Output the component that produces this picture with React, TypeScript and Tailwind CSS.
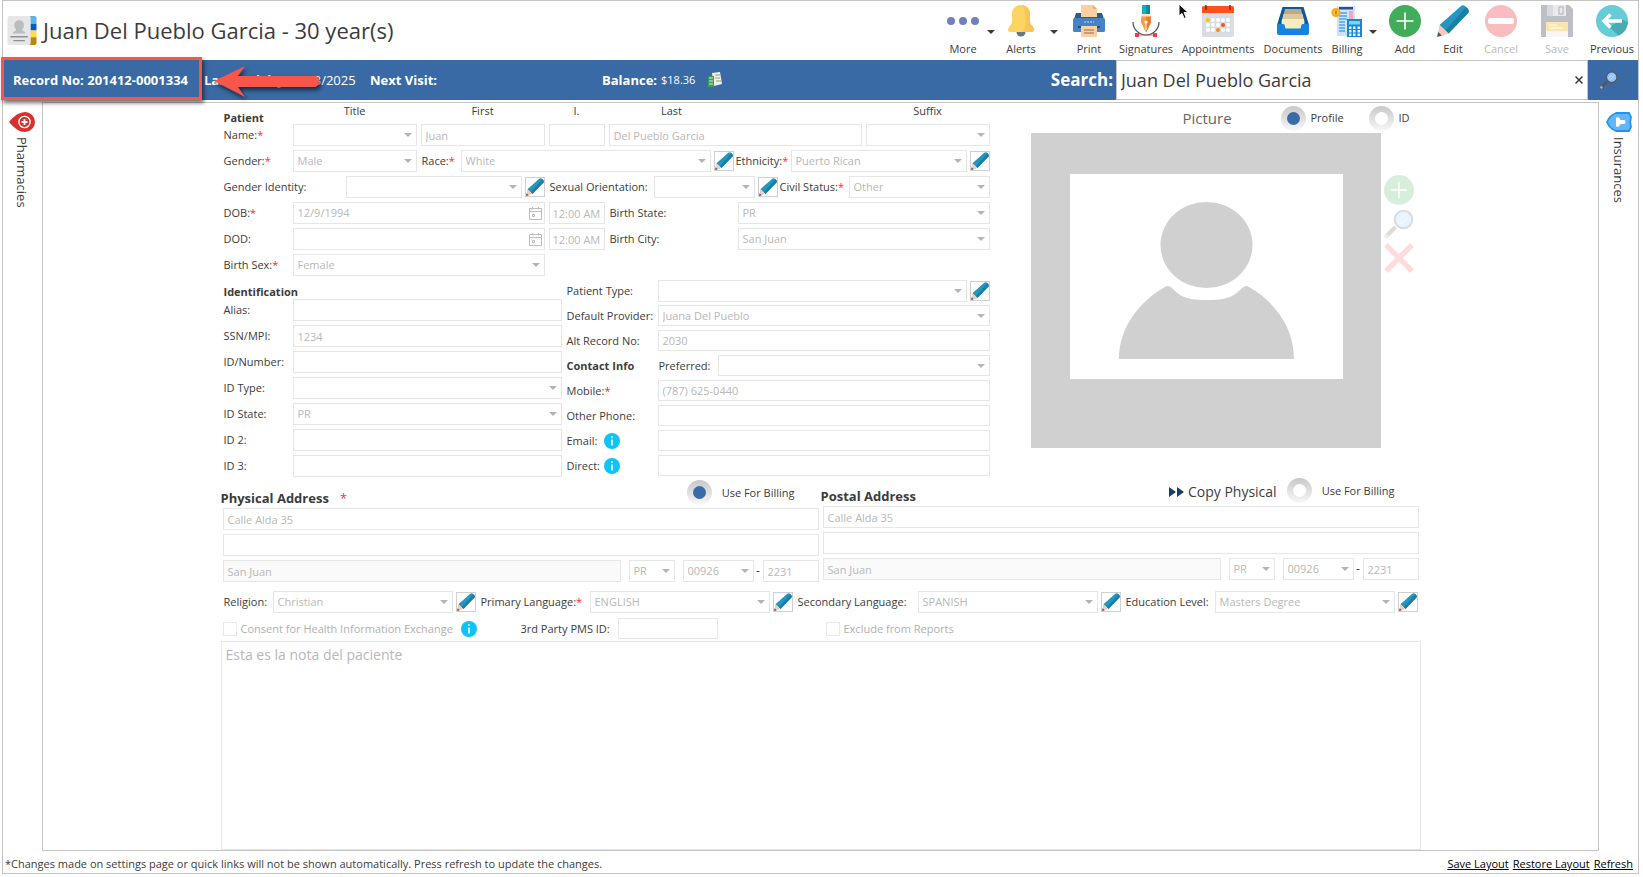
import { useId } from "react";
import type { ReactNode } from "react";
import clsx from "clsx";

const fieldStyles =
  "min-w-0 border border-[#e6e6e6] bg-white px-1 text-[11px] leading-4 text-[#b8b8b8] disabled:opacity-100";

/* ---------- Icons ---------- */

const Pencil = ({ className }: { className?: string }) => (
  <svg viewBox="0 0 32 32" className={className} aria-hidden="true">
    <path d="M23.500 1.500q2.500-2.500 5 0l2 2q2.500 2.500.2 5L11.500 28.500 2.500 20z" fill="#2596be" />
    <path d="M29 2l1.500 1.500q2.500 2.500.2 5L11.500 28.500 8.500 25.500z" fill="#1a7fa6" />
    <path d="M2.500 20l9 8.500-9 3.200-2-1.500z" fill="#f7c9b6" />
    <path d="M1.200 27L0 32l4.800-1.500z" fill="#3c5c78" />
  </svg>
);

const Caret = ({ className }: { className?: string }) => (
  <svg viewBox="0 0 8 4" className={clsx("h-1 w-2", className)} aria-hidden="true">
    <path d="M0 0h8L4 4z" fill="currentColor" />
  </svg>
);

const InfoIcon = () => (
  <svg viewBox="0 0 16 16" className="size-4 shrink-0" role="img" aria-label="Information">
    <circle cx="8" cy="8" r="8" fill="#0cc4fa" />
    <path d="M8 3.2v1.6M8 6.4v6" stroke="#fff" strokeWidth="1.6" />
  </svg>
);

const CalendarIcon = () => (
  <svg viewBox="0 0 13 13" className="size-[13px] shrink-0" fill="none" stroke="#bdbdbd" aria-hidden="true">
    <path d="M.5 1.5h12v11H.5zM.5 4.5h12M3.5 0v2.5M9.5 0v2.5M3.5 7.5h2v2h-2z" />
  </svg>
);

const Magnifier = ({ className }: { className?: string }) => (
  <svg viewBox="0 0 30 30" className={className} aria-hidden="true">
    <path d="M11.5 18L2 27.5" stroke="#5a5547" strokeWidth="4" />
    <path d="M3.6 26L1 28.6" stroke="#c9b06a" strokeWidth="4" />
    <circle cx="19.5" cy="10.5" r="8.8" fill="#8cc4fb" stroke="#555" strokeWidth="2" />
    <path d="M14 12l7-6M16.500 15l8-7" stroke="#bfe0ff" strokeWidth="1.500" />
  </svg>
);

const MoreIcon = () => (
  <svg viewBox="0 0 32 32" className="size-8" fill="#7280bd">
    <circle cx="4" cy="16" r="4" />
    <circle cx="16" cy="16" r="4" />
    <circle cx="28" cy="16" r="4" />
  </svg>
);

const BellIcon = () => (
  <svg viewBox="0 0 32 32" className="size-8">
    <path d="M11.500 27h9a4.500 4.500 0 0 1-9 0z" fill="#637988" />
    <path d="M16 0c-6 0-9 4-9 9v8c0 3-4 4-4 8q0 2 2 2h22q2 0 2-2c0-4-4-5-4-8V9c0-5-3-9-9-9z" fill="#fdd462" />
    <path d="M17 0c5 1 8 4 8 9v8c0 3 4 4 4 8q0 2-2 2h-9c4-5 4-22-1-27z" fill="#f8c455" />
  </svg>
);

const PrinterIcon = () => (
  <svg viewBox="0 0 32 32" className="size-8">
    <path d="M3 8h26l3 9H0z" fill="#2d5b8d" />
    <path d="M8 0h12l4 4v8H8z" fill="#fdd0a2" />
    <path d="M20 0l4 4h-4z" fill="#e8ad7d" />
    <rect y="13" width="32" height="14" rx="1.500" fill="#4583c4" />
    <rect x="5" y="21" width="22" height="2" fill="#2d4b6d" />
    <path d="M8 21h16v11H8z" fill="#fdd0a2" />
    <path d="M11 25h10M11 28h10" stroke="#8a6a55" />
    <path d="M11 17h10" stroke="#b9dcff" strokeDasharray="2 1" />
  </svg>
);

const SignatureIcon = () => (
  <svg viewBox="0 0 32 32" className="size-8">
    <path d="M3 17a13 13 0 0 0 26 0" fill="none" stroke="#44545e" strokeWidth="1.200" />
    <path d="M7 30h18" stroke="#f43b47" strokeWidth=".8" />
    <path d="M12 0h4v9h-4z" fill="#12b0c4" />
    <path d="M16 0h4v9h-4z" fill="#0b8b9d" />
    <path d="M11.500 11h9l.7 6L16 27.500 10.800 17z" fill="#f99a45" />
    <path d="M16 11h4.500l.7 6L16 27.500z" fill="#ee7c25" />
    <path d="M12 9h8v2.500h-8z" fill="#fbe3cc" />
    <path d="M16 17v8" stroke="#fff" />
    <circle cx="16" cy="17" r="1.600" fill="#fff" />
    <path d="M5 28h4v4H5zM23 28h4v4h-4z" fill="#f43b47" />
  </svg>
);

const AppointmentsIcon = () => (
  <svg viewBox="0 0 32 32" className="size-8">
    <rect y="1" width="32" height="31" rx="2" fill="#dadce3" />
    <path d="M0 8V3q0-2 2-2h28q2 0 2 2v5z" fill="#fa5319" />
    <path d="M4 0v5M28 0v5" stroke="#8d2f18" strokeWidth="1.600" />
    <g fill="#fff">
      <circle cx="11" cy="15" r="2" /><circle cx="16" cy="15" r="2" /><circle cx="21" cy="15" r="2" /><circle cx="26" cy="15" r="2" />
      <circle cx="6" cy="20" r="2" /><circle cx="11" cy="20" r="2" /><circle cx="16" cy="20" r="2" /><circle cx="26" cy="20" r="2" />
      <circle cx="6" cy="25" r="2" /><circle cx="11" cy="25" r="2" /><circle cx="21" cy="25" r="2" /><circle cx="26" cy="25" r="2" />
    </g>
    <circle cx="6" cy="15" r="2" fill="#fdc500" />
    <circle cx="21" cy="20" r="2" fill="#fa5319" />
    <circle cx="16" cy="25" r="2" fill="#fb8c00" />
  </svg>
);

const DocumentsIcon = () => (
  <svg viewBox="0 0 32 32" className="size-8">
    <path d="M5.500 2h21L32 20v2H0v-2z" fill="#0d5a94" />
    <path d="M8 4h16l2 8H6z" fill="#bda888" />
    <path d="M6.500 9h19l2 8h-23z" fill="#dcc9a0" />
    <path d="M5 14h22l1 11H4z" fill="#f7ecc0" />
    <path d="M0 19h6q2 0 2 3 0 1.500 1.500 1.500h13Q24 23.500 24 22q0-3 2-3h6v9q0 2-2 2H2q-2 0-2-2z" fill="#1583e2" />
  </svg>
);

const BillingIcon = () => (
  <svg viewBox="0 0 32 32" className="size-8">
    <path d="M6 1h18v30H6z" fill="#cfe4fa" />
    <path d="M8 2h14v2.500H8z" fill="#2b4b9b" />
    <path d="M8 8h8M8 11h8M8 14h8M8 17h6M8 20h6M8 23h6M8 26h6" stroke="#4aa5ec" strokeWidth="1.500" />
    <path d="M18 6h4v8h-4z" fill="#f2a6bd" />
    <path d="M16 14h15v18H16z" fill="#1d86d1" />
    <path d="M18 16h11v3.500H18z" fill="#74d8f2" />
    <path d="M18 21.500h2.500V24H18zM22 21.500h2.500V24H22zM26.500 21.500H29V24h-2.500zM18 25h2.500v2.500H18zM22 25h2.500v2.500H22zM26.500 25H29v2.500h-2.500zM18 28.500h2.500V31H18zM22 28.500h2.500V31H22zM26.500 28.500H29V31h-2.500z" fill="#e2f4ff" />
    <circle cx="5" cy="7.500" r="4.600" fill="#f9a51a" />
    <circle cx="5" cy="7.500" r="2.800" fill="#fdc544" />
    <path d="M5 5.500v4" stroke="#c46b08" strokeWidth="1.400" />
  </svg>
);

const AddIcon = ({ className }: { className?: string }) => (
  <svg viewBox="0 0 32 32" className={className}>
    <circle cx="16" cy="16" r="16" fill="#41ad5b" />
    <path d="M16 7.500v17M7.500 16h17" stroke="#fff" strokeWidth="1.600" />
  </svg>
);

const CancelIcon = () => (
  <svg viewBox="0 0 32 32" className="size-8">
    <circle cx="16" cy="16" r="16" fill="#f8bdbe" />
    <rect x="3" y="13" width="26" height="6" rx="2.500" fill="#fff" />
  </svg>
);

const SaveIcon = () => (
  <svg viewBox="0 0 32 32" className="size-8">
    <path d="M0 0h28l4 4v28H0z" fill="#bcbfc6" />
    <path d="M6 0h19v11H6z" fill="#e9eaec" />
    <path d="M6 0h6v11H6z" fill="#d7d9dd" />
    <rect x="18" y="2" width="4" height="7" fill="none" stroke="#aeb1b8" />
    <path d="M5 17h22v15H5z" fill="#f6f6f6" />
    <path d="M5 17h22v9H5z" fill="#fce5ab" />
    <path d="M8 20h8M8 23h14" stroke="#fff" strokeWidth="1.200" />
  </svg>
);

const PreviousIcon = () => (
  <svg viewBox="0 0 32 32" className="size-8">
    <circle cx="16" cy="16" r="16" fill="#66cdd6" />
    <path d="M13 22l9.600 8.600A16 16 0 0 0 32 17l-6-2.500z" fill="#48aab5" />
    <path d="M14.500 9.500L8 16l6.500 6.500M8.500 16H26" fill="none" stroke="#fff" strokeWidth="3.400" />
  </svg>
);

const ContactIcon = () => (
  <svg viewBox="0 0 30 30" className="h-[29px] w-[30px] shrink-0" aria-hidden="true">
    <path d="M23 0h5q2 0 2 2v6h-7z" fill="#5db4ea" />
    <path d="M23 8h7v7h-7z" fill="#0a5cbb" />
    <path d="M23 15h7v7h-7z" fill="#ffdc4e" />
    <path d="M23 22h7v6q0 2-2 2h-5z" fill="#b58a08" />
    <rect width="24" height="30" rx="2" fill="#e6e6e6" />
    <path d="M12 4.500c3 0 5 2 5 5 0 2-1 3.500-2 4.500 0 2 3.500 1.500 3.500 4h-13c0-2.500 3.500-2 3.500-4-1-1-2-2.500-2-4.500 0-3 2-5 5-5z" fill="#b9bec1" />
    <path d="M3 21.500h18M6 25.500h12" stroke="#8b9296" strokeWidth="1.400" />
  </svg>
);

const PharmacyPin = () => (
  <svg viewBox="0 0 26 20" className="h-5 w-[26px]" aria-hidden="true">
    <path d="M0 10Q8 0 16 0a9.500 9.500 0 0 1 0 20Q8 20 0 10z" fill="#d8302f" />
    <circle cx="15.500" cy="10" r="5.600" fill="none" stroke="#fff" strokeWidth="1.400" />
    <path d="M15.500 7v6M12.500 10h6" stroke="#fff" strokeWidth="1.800" />
  </svg>
);

const InsuranceBadge = () => (
  <svg viewBox="0 0 26 20" className="h-5 w-[26px]" aria-hidden="true">
    <path d="M1 10Q4 3 10 1h13l2 4q-1.500 5 0 10l-2 4H10Q4 17 1 10z" fill="#64b5f8" stroke="#2094f3" strokeWidth="1.800" />
    <path d="M10 5.500h3l1.500 2.500H18q1.500 0 1.500 2T18 12h-3.500L13 14.500h-3z" fill="#fff" />
  </svg>
);

/* ---------- Form controls ---------- */

interface LabelProps {
  htmlFor?: string;
  required?: boolean;
  className?: string;
  children: ReactNode;
}

const Label = ({ htmlFor, required, className, children }: LabelProps) => (
  <label htmlFor={htmlFor} className={clsx("shrink-0 text-[11px] leading-4 whitespace-nowrap", className)}>
    {children}
    {required && <span className="text-[#ff2a2a]">*</span>}
  </label>
);

interface FieldProps {
  id?: string;
  name?: string;
  value?: string;
  className?: string;
}

const TextField = ({ id, name, value = "", className }: FieldProps) => (
  <input
    id={id}
    type="text"
    aria-label={name}
    defaultValue={value}
    disabled
    className={clsx(fieldStyles, className ?? "h-[22px] flex-1")}
  />
);

const SelectField = ({ id, name, value = "", className }: FieldProps) => (
  <div className={clsx("grid min-w-0 items-center", className ?? "h-[22px] flex-1")}>
    <select
      id={id}
      aria-label={name}
      disabled
      className={clsx(fieldStyles, "col-start-1 row-start-1 h-full w-full appearance-none")}
    >
      <option>{value}</option>
    </select>
    <Caret className="pointer-events-none col-start-1 row-start-1 mr-[5px] justify-self-end text-[#b4b4b4]" />
  </div>
);

const EditableSelect = ({ id, value, className }: FieldProps) => (
  <div className={clsx("flex min-w-0 items-center gap-[3px]", className ?? "flex-1")}>
    <SelectField id={id} value={value} />
    <button type="button" aria-label="Edit list" className="size-5 shrink-0 border border-[#cfcfcf] bg-white">
      <Pencil className="size-[18px]" />
    </button>
  </div>
);

const DateField = ({ id, value = "" }: FieldProps) => (
  <div className="flex h-[22px] w-[252px] items-center border border-[#e6e6e6] pr-[2px]">
    <input
      id={id}
      type="text"
      defaultValue={value}
      disabled
      className="min-w-0 flex-1 px-1 text-[11px] leading-4 text-[#b8b8b8]"
    />
    <CalendarIcon />
  </div>
);

interface RadioProps {
  group: string;
  label: string;
  checked?: boolean;
  className?: string;
}

const Radio = ({ group, label, checked, className }: RadioProps) => (
  <label className={clsx("flex items-center text-[11px] leading-4 whitespace-nowrap", className)}>
    <input
      type="radio"
      name={group}
      defaultChecked={checked}
      className="grid size-[25px] shrink-0 appearance-none place-content-center rounded-full bg-linear-to-b from-[#c8c8c8] to-[#f8f8f8] before:size-[13px] before:rounded-full before:bg-white checked:before:bg-[#3a6ba6]"
    />
    {label}
  </label>
);

const CheckField = ({ label }: { label: string }) => (
  <label className="flex items-center gap-1 text-[11px] leading-4 whitespace-nowrap text-[#b0b0b0]">
    <input type="checkbox" disabled className="size-[14px] appearance-none border border-[#e9e9e9]" />
    {label}
  </label>
);

/* ---------- Toolbar ---------- */

interface ToolProps {
  label: string;
  icon: ReactNode;
  className: string;
  disabled?: boolean;
}

const Tool = ({ label, icon, className, disabled }: ToolProps) => (
  <button
    type="button"
    disabled={disabled}
    className={clsx("flex shrink-0 flex-col items-center gap-1 text-[11px] leading-4 disabled:text-[#b9b9b9]", className)}
  >
    {icon}
    {label}
  </button>
);

const ToolMenu = ({ label, className }: { label: string; className: string }) => (
  <button type="button" aria-label={label} className={clsx("flex h-[57px] shrink-0 items-center justify-center pb-1", className)}>
    <Caret />
  </button>
);

const Toolbar = () => (
  <header className="flex h-[59px] items-start justify-between">
    <div className="flex items-center gap-[6px] pt-[13px] pl-1">
      <ContactIcon />
      <h1 className="text-[22px] leading-8 whitespace-nowrap">Juan Del Pueblo Garcia - 30 year(s)</h1>
    </div>
    <nav className="relative flex pt-1 pr-[2px]">
      <Tool label="More" icon={<MoreIcon />} className="w-[42px]" />
      <ToolMenu label="More options" className="w-[14px]" />
      <Tool label="Alerts" icon={<BellIcon />} className="w-[46px]" />
      <ToolMenu label="Alert options" className="w-5" />
      <Tool label="Print" icon={<PrinterIcon />} className="w-[50px]" />
      <Tool label="Signatures" icon={<SignatureIcon />} className="w-16" />
      <Tool label="Appointments" icon={<AppointmentsIcon />} className="w-20" />
      <Tool label="Documents" icon={<DocumentsIcon />} className="w-[70px]" />
      <Tool label="Billing" icon={<BillingIcon />} className="w-[38px]" />
      <ToolMenu label="Billing options" className="w-[14px]" />
      <Tool label="Add" icon={<AddIcon className="size-8" />} className="w-[50px]" />
      <Tool label="Edit" icon={<Pencil className="size-8" />} className="w-[46px]" />
      <Tool label="Cancel" icon={<CancelIcon />} className="w-[50px]" disabled />
      <Tool label="Save" icon={<SaveIcon />} className="w-[62px]" disabled />
      <Tool label="Previous" icon={<PreviousIcon />} className="w-12" />
      {/* Mouse pointer */}
      <svg viewBox="0 0 12 18" className="absolute top-[2px] left-[236px] h-[18px] w-3" aria-hidden="true">
        <path d="M1 1v12l3-2.500 2.200 5 2-1L6 9.500h4z" fill="#111" stroke="#fff" />
      </svg>
    </nav>
  </header>
);

const RecordBar = () => (
  <div className="relative flex h-10 items-center bg-[#396aa5] text-[13px] leading-5 whitespace-nowrap text-white">
    <strong className="w-[191px] pl-[10px]">Record No: 201412-0001334</strong>
    <p className="flex w-[176px] gap-[6px] pl-[10px]">
      <strong>Last Activity:</strong> 10/3/2025
    </p>
    <strong className="w-[232px]">Next Visit:</strong>
    <p className="flex items-center gap-1">
      <strong>Balance:</strong>
      <span className="text-[11px]">$18.36</span>
      <svg viewBox="0 0 16 16" className="ml-2 size-4" aria-hidden="true">
        <path d="M5 1l8-1 2 12-8 2z" fill="#f1f1e6" />
        <path d="M8 3h5M8 6h5M9 9h5" stroke="#8aa07c" />
        <path d="M1 4h6v11H1z" fill="#3e9a57" />
        <path d="M2 6h4M2 9h4M2 12h4" stroke="#d7f0d8" />
      </svg>
    </p>
    <label htmlFor="search" className="ml-auto pr-[3px] text-[17px] font-bold">
      Search:
    </label>
    <div className="flex h-full w-[472px] items-center border border-[#c4c4c4] bg-white pr-1 text-[#3c3c3c]">
      <input
        id="search"
        type="text"
        defaultValue="Juan Del Pueblo Garcia"
        className="min-w-0 flex-1 pl-1 text-[18px] leading-6 outline-none"
      />
      <button type="button" aria-label="Clear search">
        <svg viewBox="0 0 8 8" className="size-2" stroke="currentColor" strokeWidth="1.500">
          <path d="M.5.5l7 7M7.500.5l-7 7" />
        </svg>
      </button>
    </div>
    <button type="button" aria-label="Search" className="flex h-full w-[50px] items-center pl-3">
      <Magnifier className="size-[18px]" />
    </button>

    {/* Callout around the record number */}
    <div className="absolute -top-[3px] -left-[2px] h-[43px] w-[201px] border-3 border-[#f9564a] shadow-[2px_3px_4px_rgba(0,0,0,0.55)]" />
    <svg viewBox="0 0 108 36" className="absolute top-1 left-[210px] h-9 w-[108px] drop-shadow-[2px_3px_2px_rgba(0,0,0,0.6)]" aria-hidden="true">
      <path d="M1 17L32 2 25 12H102q4 0 4 5t-4 6H25l7 10z" fill="#f9564a" />
    </svg>
  </div>
);

/* ---------- Form sections ---------- */

const PatientSection = () => {
  const id = useId();

  return (
    <div className="flex flex-col gap-1">
      <div className="-mb-1 flex h-[21px] text-[11px] leading-4">
        <h2 className="w-[69px] self-end leading-3 font-bold">Patient</h2>
        <span className="w-[124px] text-center">Title</span>
        <span className="ml-1 w-[124px] text-center">First</span>
        <span className="ml-1 w-14 text-center">I.</span>
        <span className="ml-1 w-[126px] text-center">Last</span>
        <span className="ml-auto w-[124px] text-center">Suffix</span>
      </div>
      <div className="flex items-center">
        <Label htmlFor={`${id}-first`} required className="w-[69px]">Name:</Label>
        <div className="flex flex-1 gap-1">
          <SelectField name="Title" className="h-[22px] w-[124px]" />
          <TextField id={`${id}-first`} value="Juan" className="h-[22px] w-[124px]" />
          <TextField name="Initial" className="h-[22px] w-14" />
          <TextField name="Last name" value="Del Pueblo Garcia" />
          <SelectField name="Suffix" className="h-[22px] w-[124px]" />
        </div>
      </div>
      <div className="flex items-center">
        <Label htmlFor={`${id}-gender`} required className="w-[69px]">Gender:</Label>
        <SelectField id={`${id}-gender`} value="Male" className="h-[22px] w-[124px]" />
        <Label htmlFor={`${id}-race`} required className="w-11 pl-[5px]">Race:</Label>
        <EditableSelect id={`${id}-race`} value="White" />
        <Label htmlFor={`${id}-ethnicity`} required className="w-[57px] pl-[2px]">Ethnicity:</Label>
        <EditableSelect id={`${id}-ethnicity`} value="Puerto Rican" className="w-[199px]" />
      </div>
      <div className="flex items-center">
        <Label htmlFor={`${id}-identity`} className="w-[122px]">Gender Identity:</Label>
        <EditableSelect id={`${id}-identity`} className="w-[199px]" />
        <Label htmlFor={`${id}-orientation`} className="w-[109px] pl-[5px]">Sexual Orientation:</Label>
        <EditableSelect id={`${id}-orientation`} />
        <Label htmlFor={`${id}-civil`} required className="w-[71px] pl-[2px]">Civil Status:</Label>
        <SelectField id={`${id}-civil`} value="Other" className="h-[22px] w-[141px]" />
      </div>
      <div className="flex items-center">
        <Label htmlFor={`${id}-dob`} required className="w-[69px]">DOB:</Label>
        <DateField id={`${id}-dob`} value="12/9/1994" />
        <TextField name="Time of birth" value="12:00 AM" className="ml-1 h-[22px] w-14 pr-0 pl-[3px]" />
        <Label htmlFor={`${id}-state`} className="w-[133px] pl-[5px]">Birth State:</Label>
        <SelectField id={`${id}-state`} value="PR" />
      </div>
      <div className="flex items-center">
        <Label htmlFor={`${id}-dod`} className="w-[69px]">DOD:</Label>
        <DateField id={`${id}-dod`} />
        <TextField name="Time of death" value="12:00 AM" className="ml-1 h-[22px] w-14 pr-0 pl-[3px]" />
        <Label htmlFor={`${id}-city`} className="w-[133px] pl-[5px]">Birth City:</Label>
        <SelectField id={`${id}-city`} value="San Juan" />
      </div>
      <div className="flex items-center">
        <Label htmlFor={`${id}-sex`} required className="w-[69px]">Birth Sex:</Label>
        <SelectField id={`${id}-sex`} value="Female" className="h-[22px] w-[252px]" />
      </div>
    </div>
  );
};

const identificationFields = [
  { label: "Alias:", value: "" },
  { label: "SSN/MPI:", value: "1234" },
  { label: "ID/Number:", value: "" },
  { label: "ID Type:", value: "", list: true },
  { label: "ID State:", value: "PR", list: true },
  { label: "ID 2:", value: "" },
  { label: "ID 3:", value: "" },
];

const IdentificationSection = () => {
  const id = useId();

  return (
    <div className="w-[338px] shrink-0">
      <h2 className="pt-[9px] text-[11px] leading-[14px] font-bold">Identification</h2>
      <div className="flex flex-col gap-1">
        {identificationFields.map(({ label, value, list }, index) => (
          <div key={label} className="flex items-center">
            <Label htmlFor={`${id}-${index}`} className="w-[69px]">{label}</Label>
            {list ? <SelectField id={`${id}-${index}`} value={value} /> : <TextField id={`${id}-${index}`} value={value} />}
          </div>
        ))}
      </div>
    </div>
  );
};

const ContactSection = () => (
  <div className="flex flex-1 flex-col gap-1 pt-1 pl-[5px]">
    <div className="flex h-[21px] items-center">
      <Label htmlFor="patient-type" className="w-[91px]">Patient Type:</Label>
      <EditableSelect id="patient-type" />
    </div>
    <div className="flex items-center">
      <Label htmlFor="provider" className="w-[91px]">Default Provider:</Label>
      <SelectField id="provider" value="Juana Del Pueblo" className="h-[21px] flex-1" />
    </div>
    <div className="flex items-center">
      <Label htmlFor="alt-record" className="w-[91px]">Alt Record No:</Label>
      <TextField id="alt-record" value="2030" className="h-[21px] flex-1" />
    </div>
    <div className="flex items-center">
      <h2 className="w-[92px] text-[11px] leading-4 font-bold">Contact Info</h2>
      <Label htmlFor="preferred" className="w-[59px]">Preferred:</Label>
      <SelectField id="preferred" className="h-[21px] flex-1" />
    </div>
    <div className="flex items-center">
      <Label htmlFor="mobile" required className="w-[91px]">Mobile:</Label>
      <TextField id="mobile" value="(787) 625-0440" className="h-[21px] flex-1" />
    </div>
    <div className="flex items-center">
      <Label htmlFor="other-phone" className="w-[91px]">Other Phone:</Label>
      <TextField id="other-phone" className="h-[21px] flex-1" />
    </div>
    <div className="flex items-center">
      <Label htmlFor="email" className="w-[37px]">Email:</Label>
      <div className="w-[54px]"><InfoIcon /></div>
      <TextField id="email" className="h-[21px] flex-1" />
    </div>
    <div className="flex items-center">
      <Label htmlFor="direct" className="w-[37px]">Direct:</Label>
      <div className="w-[54px]"><InfoIcon /></div>
      <TextField id="direct" className="h-[21px] flex-1" />
    </div>
  </div>
);

const PictureSection = () => (
  <aside className="w-[390px] shrink-0">
    <div className="flex h-[30px] items-center">
      <h2 className="w-[250px] pl-[152px] text-[15px] leading-5 text-[#666]">Picture</h2>
      <Radio group="picture" label="Profile" checked className="w-[88px] gap-[5px]" />
      <Radio group="picture" label="ID" className="gap-[5px]" />
    </div>
    <div className="flex gap-[3px]">
      <div className="flex h-[315px] w-[350px] justify-end bg-[#d0d0d0] pt-[41px] pr-[38px]">
        <svg viewBox="0 0 273 205" className="h-[205px] w-[273px]" role="img" aria-label="No picture">
          <path d="M0 0h273v205H0z" fill="#fff" />
          <ellipse cx="136.500" cy="71" rx="46" ry="43" fill="#d0d0d0" />
          <path d="M49 185C49 153 70 127 95 113q4-3 8 2c9 10 20 11 34 11s25-1 34-11q4-5 8-2c25 14 45 40 45 72z" fill="#d0d0d0" />
        </svg>
      </div>
      <div className="flex flex-col gap-1 pt-[42px]">
        <button type="button" disabled aria-label="Add picture" className="opacity-20">
          <AddIcon className="size-[30px]" />
        </button>
        <button type="button" disabled aria-label="View picture" className="opacity-20">
          <Magnifier className="size-[30px]" />
        </button>
        <button type="button" disabled aria-label="Remove picture">
          <svg viewBox="0 0 30 30" className="size-[30px]" stroke="#fedcdc" strokeWidth="5.500">
            <path d="M2 2l26 26M28 2L2 28" />
          </svg>
        </button>
      </div>
    </div>
  </aside>
);

interface AddressProps {
  name: string;
  children: ReactNode;
}

const AddressSection = ({ name, children }: AddressProps) => (
  <section className="min-w-0">
    {children}
    <div className="flex flex-col gap-1 pl-[2px]">
      <TextField name={`${name} line 1`} value="Calle Alda 35" className="h-[22px]" />
      <TextField name={`${name} line 2`} className="h-[22px]" />
      <div className="flex items-center gap-2">
        <input
          type="text"
          aria-label={`${name} city`}
          defaultValue="San Juan"
          disabled
          className="h-[22px] min-w-0 flex-1 border border-[#e6e6e6] bg-[#fafafa] px-1 text-[11px] leading-4 text-[#b8b8b8]"
        />
        <SelectField name={`${name} state`} value="PR" className="h-[22px] w-[46px]" />
        <div className="flex items-center">
          <SelectField name={`${name} zip`} value="00926" className="h-[22px] w-[71px]" />
          <span className="w-[9px] text-center text-[12px] leading-4">-</span>
          <TextField name={`${name} zip extension`} value="2231" className="h-[22px] w-14" />
        </div>
      </div>
    </div>
  </section>
);

const DemographicsRow = () => (
  <div className="mt-[9px] flex items-center pr-[3px] pl-[3px]">
    <Label htmlFor="religion" className="w-[49px]">Religion:</Label>
    <EditableSelect id="religion" value="Christian" />
    <Label htmlFor="primary-language" required className="w-[114px] pl-[5px]">Primary Language:</Label>
    <EditableSelect id="primary-language" value="ENGLISH" />
    <Label htmlFor="secondary-language" className="w-[125px] pl-[5px]">Secondary Language:</Label>
    <EditableSelect id="secondary-language" value="SPANISH" />
    <Label htmlFor="education" className="w-[94px] pl-[5px]">Education Level:</Label>
    <EditableSelect id="education" value="Masters Degree" />
  </div>
);

interface SideTabProps {
  label: string;
  icon: ReactNode;
  className: string;
}

const SideTab = ({ label, icon, className }: SideTabProps) => (
  <button type="button" className={clsx("flex w-[39px] shrink-0 flex-col items-center gap-[5px] pt-[10px]", className)}>
    {icon}
    <span className="text-[13px] leading-4 [writing-mode:vertical-rl]">{label}</span>
  </button>
);

const App = () => {
  return (
    <div className="h-screen bg-white pr-1 pb-[3px] pl-[2px] font-['Segoe_UI','Open_Sans',sans-serif] text-[#3c3c3c]">
      <div className="flex h-full flex-col border border-[#c4c4c4]">
        <Toolbar />
        <RecordBar />

        <div className="mt-[2px] flex min-h-0 flex-1">
          <SideTab label="Pharmacies" icon={<PharmacyPin />} className="pr-[2px]" />
          <main className="min-w-0 flex-1 border border-[#c4c4c4]">
            <form className="mx-auto flex h-full w-full max-w-[1200px] flex-col">
              <div className="flex justify-between">
                <div className="w-[769px] pl-[3px]">
                  <PatientSection />
                  <div className="flex">
                    <IdentificationSection />
                    <ContactSection />
                  </div>
                </div>
                <PictureSection />
              </div>

              <div className="grid grid-cols-2 gap-[2px] pr-[2px]">
                <AddressSection name="Physical address">
                  <div className="flex h-[31px] items-start justify-between pt-[3px] pr-6">
                    <h2 className="pt-2 text-[13px] leading-5 font-bold">
                      Physical Address <span className="pl-2 text-[12px] font-normal text-[#ff2a2a]">*</span>
                    </h2>
                    <Radio group="billing-physical" label="Use For Billing" checked className="gap-[10px]" />
                  </div>
                </AddressSection>
                <AddressSection name="Postal address">
                  <div className="flex h-[29px] items-start pt-[1px] pr-6">
                    <h2 className="pt-2 text-[13px] leading-5 font-bold">Postal Address</h2>
                    <button type="button" className="ml-auto flex items-center gap-1 pr-[10px] text-[14px] leading-7">
                      <svg viewBox="0 0 15 10" className="h-[10px] w-[15px]" fill="#173f6d" aria-hidden="true">
                        <path d="M0 0l7 5-7 5zM8 0l7 5-7 5z" />
                      </svg>
                      Copy Physical
                    </button>
                    <Radio group="billing-postal" label="Use For Billing" className="gap-[10px]" />
                  </div>
                </AddressSection>
              </div>

              <DemographicsRow />

              <div className="mt-[5px] flex h-[21px] items-center pl-[2px]">
                <div className="flex w-[298px] items-center gap-2">
                  <CheckField label="Consent for Health Information Exchange" />
                  <InfoIcon />
                </div>
                <Label htmlFor="pms-id" className="w-[97px]">3rd Party PMS ID:</Label>
                <TextField id="pms-id" className="mr-[108px] h-[21px] w-[100px]" />
                <CheckField label="Exclude from Reports" />
              </div>

              <textarea
                aria-label="Patient note"
                disabled
                defaultValue="Esta es la nota del paciente"
                className="mt-[2px] min-h-0 flex-1 resize-none border border-[#e6e6e6] px-1 py-[3px] text-[14px] leading-5 text-[#b8b8b8]"
              />
            </form>
          </main>
          <SideTab label="Insurances" icon={<InsuranceBadge />} className="pl-[1px]" />
        </div>

        <footer className="flex h-[22px] items-center justify-between pt-1 pr-[5px] pl-[2px] text-[11px] leading-4 whitespace-nowrap">
          <p>*Changes made on settings page or quick links will not be shown automatically. Press refresh to update the changes.</p>
          <div className="flex gap-1 text-black">
            <a href="#save-layout" className="underline">Save Layout</a>
            <a href="#restore-layout" className="underline">Restore Layout</a>
            <a href="#refresh" className="underline">Refresh</a>
          </div>
        </footer>
      </div>
    </div>
  );
};

export default App;
